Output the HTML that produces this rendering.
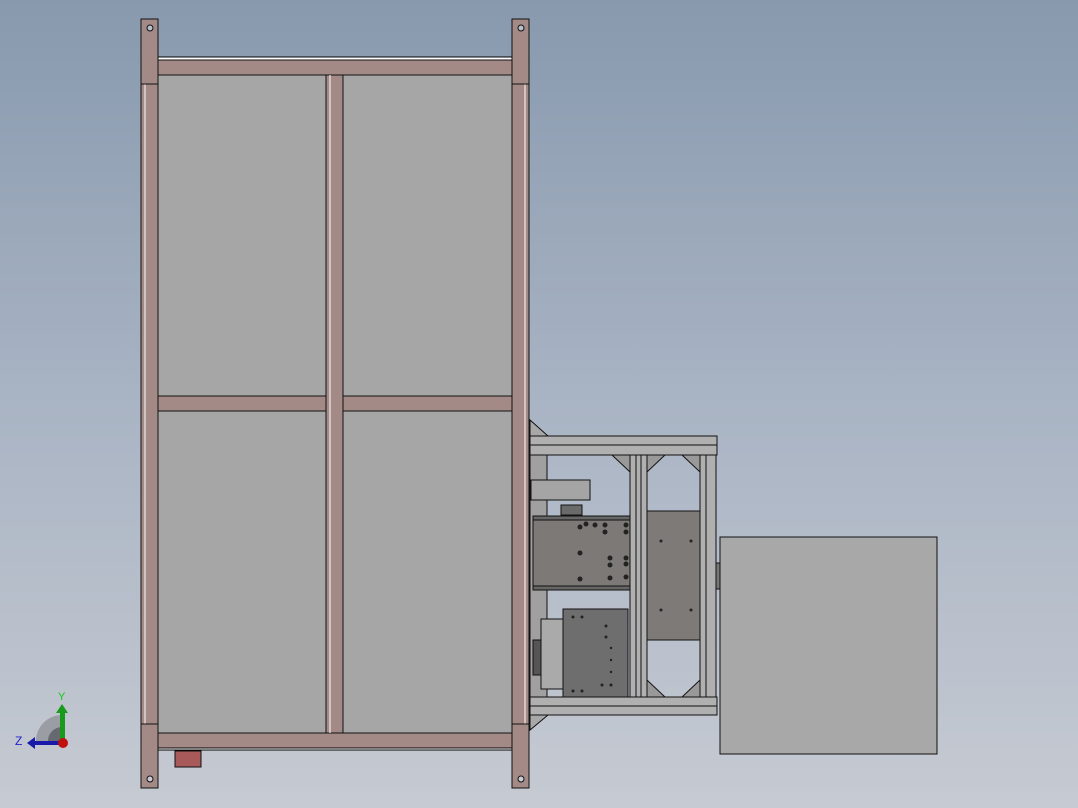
<!DOCTYPE html>
<html><head><style>
html,body{margin:0;padding:0}
body{width:1078px;height:808px;overflow:hidden;background:linear-gradient(#8899ae,#a9b4c4 50%,#c6cad2);font-family:"Liberation Sans",sans-serif}
svg{position:absolute;left:0;top:0}
</style></head><body>
<svg width="1078" height="808" viewBox="0 0 1078 808">
<g stroke="#111" stroke-width="1">
<!-- panels -->
<rect x="156" y="74" width="358" height="660" fill="#a6a6a6"/>
<!-- rails -->
<rect x="141" y="57" width="388" height="3" fill="#fff" stroke="#000"/>
<rect x="141" y="60" width="388" height="15" fill="#a38a86"/>
<rect x="156" y="396" width="358" height="15" fill="#a38a86"/>
<rect x="141" y="733" width="388" height="15" fill="#a38a86"/>
<rect x="141" y="748" width="388" height="2" fill="#fff" stroke="#000"/>
<!-- verticals -->
<rect x="141" y="84" width="17" height="640" fill="#a38a86"/>
<rect x="512" y="84" width="17" height="640" fill="#a38a86"/>
<rect x="326" y="75" width="17" height="658" fill="#a38a86"/>
<line x1="145" y1="84" x2="145" y2="724" stroke="#fff"/>
<line x1="525" y1="84" x2="525" y2="724" stroke="#fff"/>
<line x1="330" y1="75" x2="330" y2="733" stroke="#fff"/>
<!-- plates -->
<rect x="141" y="19" width="17" height="65" fill="#a38a86"/>
<rect x="512" y="19" width="17" height="65" fill="#a38a86"/>
<rect x="141" y="724" width="17" height="64" fill="#a38a86"/>
<rect x="512" y="724" width="17" height="64" fill="#a38a86"/>
<circle cx="150" cy="28" r="3" fill="#b8c0cc"/>
<circle cx="521" cy="28" r="3" fill="#b8c0cc"/>
<circle cx="150" cy="779" r="3" fill="#c8ccd4"/>
<circle cx="521" cy="779" r="3" fill="#c8ccd4"/>
<rect x="175" y="751" width="26" height="16" fill="#a85a5a"/>
<!-- mechanism -->
<polygon points="530,420 548,436 530,436" fill="#a8a8a8"/>
<polygon points="530,715 548,715 530,730" fill="#a8a8a8"/>
<rect x="530" y="455" width="17" height="242" fill="#a0a0a0"/>
<rect x="531" y="480" width="59" height="20" fill="#a5a5a5"/>
<rect x="561" y="505" width="21" height="10" fill="#6a6a6a"/>
<rect x="647" y="511" width="53" height="129" fill="#7e7a78"/>
<rect x="533" y="516" width="97" height="74" fill="#7d7976"/>
<rect x="533" y="516" width="97" height="4" fill="#666"/>
<rect x="533" y="586" width="97" height="4" fill="#666"/>
<rect x="563" y="609" width="65" height="88" fill="#6e6e6e"/>
<rect x="541" y="619" width="22" height="70" fill="#aaa"/>
<rect x="533" y="640" width="8" height="35" fill="#555"/>
<rect x="530" y="436" width="187" height="19" fill="#b0b0b0"/>
<line x1="530" y1="445" x2="717" y2="445"/>
<rect x="530" y="697" width="187" height="18" fill="#b0b0b0"/>
<line x1="530" y1="706" x2="717" y2="706"/>
<rect x="630" y="455" width="17" height="242" fill="#b0b0b0"/>
<line x1="636" y1="455" x2="636" y2="697"/>
<line x1="641" y1="455" x2="641" y2="697"/>
<rect x="700" y="455" width="16" height="242" fill="#b0b0b0"/>
<line x1="706" y1="455" x2="706" y2="697"/>
<polygon points="612,455 630,472 630,455" fill="#999"/>
<polygon points="647,455 665,455 647,472" fill="#999"/>
<polygon points="682,455 700,455 700,472" fill="#999"/>
<polygon points="647,697 665,697 647,680" fill="#999"/>
<polygon points="682,697 700,697 700,680" fill="#999"/>
<rect x="716" y="563" width="4" height="26" fill="#777"/>
<rect x="720" y="537" width="217" height="217" fill="#a8a8a8"/>
</g>
<g fill="#222">
<circle cx="580" cy="527" r="2.5"/><circle cx="586" cy="524" r="2.5"/><circle cx="595" cy="525" r="2.5"/><circle cx="605" cy="525" r="2.5"/><circle cx="626" cy="525" r="2.5"/>
<circle cx="605" cy="532" r="2.5"/><circle cx="626" cy="532" r="2.5"/><circle cx="580" cy="553" r="2.5"/><circle cx="610" cy="558" r="2.5"/><circle cx="626" cy="558" r="2.5"/>
<circle cx="610" cy="565" r="2.5"/><circle cx="626" cy="564" r="2.5"/><circle cx="580" cy="579" r="2.5"/><circle cx="610" cy="578" r="2.5"/><circle cx="626" cy="577" r="2.5"/>
<circle cx="661" cy="541" r="1.5"/><circle cx="691" cy="541" r="1.5"/><circle cx="661" cy="610" r="1.5"/><circle cx="691" cy="610" r="1.5"/>
<circle cx="573" cy="617" r="1.5"/><circle cx="582" cy="617" r="1.5"/><circle cx="606" cy="626" r="1.5"/><circle cx="606" cy="637" r="1.5"/><circle cx="611" cy="648" r="1.2"/><circle cx="611" cy="660" r="1.2"/><circle cx="611" cy="672" r="1.2"/><circle cx="602" cy="685" r="1.5"/><circle cx="611" cy="685" r="1.5"/><circle cx="573" cy="691" r="1.5"/><circle cx="582" cy="691" r="1.5"/>
</g>
<!-- triad -->
<path d="M36,741 A26,26 0 0 1 62,715 L62,741 Z" fill="#9a9ea4"/>
<path d="M48,741 A14,14 0 0 1 62,727 L62,741 Z" fill="#666a70"/>
<rect x="60" y="712" width="5" height="30" fill="#1a9a1a"/>
<polygon points="56,713 62,704 68,713" fill="#1a9a1a"/>
<rect x="34" y="741" width="28" height="4" fill="#1a1aaa"/>
<polygon points="35,737 27,743 35,749" fill="#1a1aaa"/>
<circle cx="63" cy="743" r="5" fill="#c01010"/>
<text x="58" y="700" font-size="11" fill="#1c1">Y</text>
<text x="15" y="745" font-size="12" fill="#22c">Z</text>
</svg>
</body></html>
